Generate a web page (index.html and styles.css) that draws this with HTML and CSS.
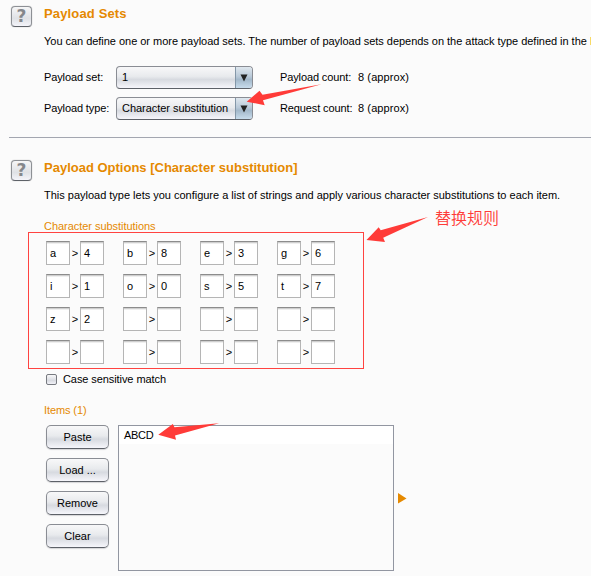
FILE: index.html
```html
<!DOCTYPE html>
<html lang="en">
<head>
<meta charset="utf-8">
<title>Payloads</title>
<link rel="stylesheet" href="styles.css">
</head>
<body>
<main class="page">
  <section class="section sets">
    <div class="help">?</div>
    <div class="content">
      <h2 class="title t-sets">Payload Sets</h2>
      <p class="desc d-sets">You can define one or more payload sets. The number of payload sets depends on the attack type defined in the <span class="link">I</span></p>
      <div class="form">
        <span>Payload set:</span>
        <div class="select"><span class="value">1</span><span class="drop"><svg width="8" height="8" viewBox="0 0 8 8"><path d="M0.5 0.5H7.5L4 7.5Z" fill="#222"/></svg></span></div>
        <span class="count">Payload count:</span><span>8 (approx)</span>
        <span>Payload type:</span>
        <div class="select"><span class="value">Character substitution</span><span class="drop"><svg width="8" height="8" viewBox="0 0 8 8"><path d="M0.5 0.5H7.5L4 7.5Z" fill="#222"/></svg></span></div>
        <span class="count">Request count:</span><span>8 (approx)</span>
      </div>
    </div>
  </section>
  <section class="section options">
    <div class="help">?</div>
    <div class="content">
      <h2 class="title t-opts">Payload Options [Character substitution]</h2>
      <p class="desc d-opts">This payload type lets you configure a list of strings and apply various character substitutions to each item.</p>
      <h3 class="label l-subs">Character substitutions</h3>
      <div class="rules">
        <div class="pair"><i>a</i><b>&gt;</b><i>4</i></div><div class="pair"><i>b</i><b>&gt;</b><i>8</i></div><div class="pair"><i>e</i><b>&gt;</b><i>3</i></div><div class="pair"><i>g</i><b>&gt;</b><i>6</i></div>
        <div class="pair"><i>i</i><b>&gt;</b><i>1</i></div><div class="pair"><i>o</i><b>&gt;</b><i>0</i></div><div class="pair"><i>s</i><b>&gt;</b><i>5</i></div><div class="pair"><i>t</i><b>&gt;</b><i>7</i></div>
        <div class="pair"><i>z</i><b>&gt;</b><i>2</i></div><div class="pair"><i></i><b>&gt;</b><i></i></div><div class="pair"><i></i><b>&gt;</b><i></i></div><div class="pair"><i></i><b>&gt;</b><i></i></div>
        <div class="pair"><i></i><b>&gt;</b><i></i></div><div class="pair"><i></i><b>&gt;</b><i></i></div><div class="pair"><i></i><b>&gt;</b><i></i></div><div class="pair"><i></i><b>&gt;</b><i></i></div>
      </div>
      <div class="check"><span class="box"></span><span class="check-text">Case sensitive match</span></div>
      <h3 class="label l-items">Items (1)</h3>
      <div class="items">
        <div class="buttons">
          <div class="button">Paste</div>
          <div class="button">Load ...</div>
          <div class="button">Remove</div>
          <div class="button">Clear</div>
        </div>
        <div class="list"><div class="entry">ABCD</div></div>
        <svg class="expand" width="9" height="11" viewBox="0 0 9 11"><path d="M0 0L8.5 5.5L0 10.5Z" fill="#e58900"/></svg>
      </div>
    </div>
  </section>
  <svg class="arrows" width="591" height="576" viewBox="0 0 591 576" fill="#ff3b38">
    <path d="M246.7 101.7L259.5 90.7L262.5 94.8L321.5 84.3L263 100.3L264.7 105.2Z"/>
    <path d="M366.5 240L378.7 227.2L380.7 230.3L428 217L383.2 237.8L385 242Z"/>
    <path d="M158.3 434.8L172.8 424L174.5 427.2L219 423.3L175 435.5L176 439.8Z"/>
  </svg>
  <div class="note">替换规则</div>
</main>
</body>
</html>
```

FILE: styles.css
```css
* { box-sizing: border-box; }
html, body { margin: 0; padding: 0; }
body {
  background: #fbfbfb;
  color: #000;
  font: 11px/14px "Liberation Sans", "Noto Sans CJK SC", sans-serif;
  overflow: hidden;
}
.page { position: relative; width: 591px; height: 576px; overflow: hidden; }
.section { display: flex; padding-left: 2px; margin-left: 9px; }
.sets { height: 138px; padding-top: 6px; border-bottom: 1px solid #a3a6b0; }
.options { padding-top: 22px; }
.help {
  flex: none;
  width: 21px;
  height: 21px;
  margin-right: 12px;
  border: 1px solid #8d9095;
  border-bottom-color: #5e6268;
  border-radius: 4px;
  background: linear-gradient(#f6f6f7, #dfe1e5 60%, #f4f4fa);
  box-shadow: 0 0 1px #999;
  color: #85878b;
  font: bold 17px/19px "DejaVu Sans", sans-serif;
  text-align: center;
}
.content { flex: 1; min-width: 0; }
h2, h3, p { margin: 0; white-space: nowrap; }
.title { color: #e58900; font-size: 13px; line-height: 16px; }
.t-sets { letter-spacing: 0.15px; }
.desc { margin-top: 12px; letter-spacing: -0.01px; }
.d-sets { letter-spacing: -0.03px; }
.link { color: #e58900; }
.form {
  display: grid;
  grid-template-columns: 72px 137px 78px auto;
  grid-auto-rows: 23px;
  row-gap: 8px;
  align-items: center;
  margin-top: 18px;
}
.form > span { padding-bottom: 2px; white-space: nowrap; letter-spacing: -0.12px; }
.form > .count { padding-left: 27px; margin-right: -27px; }
.form > .count + span { padding-left: 27px; letter-spacing: 0.1px; }
.select {
  display: flex;
  height: 23px;
  border: 1px solid #8a8d94;
  border-bottom-color: #5d6168;
  border-radius: 4px;
  background: linear-gradient(#f8f8f9, #e8eaed 45%, #d7dae0 60%, #f6f6fb);
  overflow: hidden;
}
.value { flex: 1; padding-left: 5px; line-height: 21px; white-space: nowrap; letter-spacing: -0.04px; }
.drop {
  flex: none;
  width: 17px;
  border-left: 1px solid #8497a8;
  background: linear-gradient(#dfe7ee, #b9c9d8 45%, #a3b8ca 60%, #c8dcec);
  display: flex;
  align-items: center;
  justify-content: center;
}
.label { color: #e58900; font-size: 11px; font-weight: normal; line-height: 14px; }
.l-subs { margin-top: 17px; letter-spacing: -0.04px; }
.rules {
  display: grid;
  grid-template-columns: repeat(4, 58px);
  grid-auto-rows: 24px;
  gap: 9px 19px;
  width: 336px;
  height: 137px;
  margin-top: -1px;
  margin-left: -16px;
  padding: 8px 0 0 17px;
  border: 1px solid #ff4340;
}
.pair { display: flex; }
.pair i {
  width: 24px;
  height: 24px;
  padding-left: 3px;
  border: 1px solid #b5b5b5;
  border-top-color: #8c8c8c;
  background: #fff;
  box-shadow: inset 0 1px #cfcfcf, inset 0 2px #efefef;
  font-style: normal;
  line-height: 22px;
}
.pair b { width: 10px; font-weight: normal; font-size: 11px; line-height: 24px; text-align: center; }
.check { display: flex; align-items: center; height: 14px; margin-top: 3px; padding-left: 2px; }
.check-text { letter-spacing: -0.08px; }
.box {
  width: 11px;
  height: 11px;
  margin-right: 6px;
  border: 1px solid #777a80;
  border-radius: 2px;
  background: linear-gradient(#f8f8f9, #d9dbe1 60%, #f2f2f8);
}
.l-items { margin-top: 17px; letter-spacing: -0.1px; }
.items { display: flex; margin-top: 8px; padding-left: 2px; }
.buttons { display: grid; grid-auto-rows: 24px; row-gap: 9px; width: 63px; height: 146px; align-content: start; }
.button {
  border: 1px solid #8a8d94;
  border-bottom-color: #5d6168;
  border-radius: 5px;
  background: linear-gradient(#f8f8f9, #e8eaed 45%, #d7dae0 60%, #f6f6fb);
  box-shadow: 0 1px 1px #d5d5d8;
  line-height: 22px;
  text-align: center;
}
.list { width: 276px; height: 146px; margin-left: 9px; border: 1px solid #9296a1; }
.entry { height: 18px; padding-left: 5px; background: #fff; line-height: 18px; letter-spacing: -0.3px; }
.expand { margin: 68px 0 0 4px; }
.arrows { position: absolute; left: 0; top: 0; }
.note {
  position: absolute;
  left: 435px;
  top: 205px;
  color: #ff3b38;
  font: 350 16px/24px "Noto Sans CJK SC", sans-serif;
}
```
